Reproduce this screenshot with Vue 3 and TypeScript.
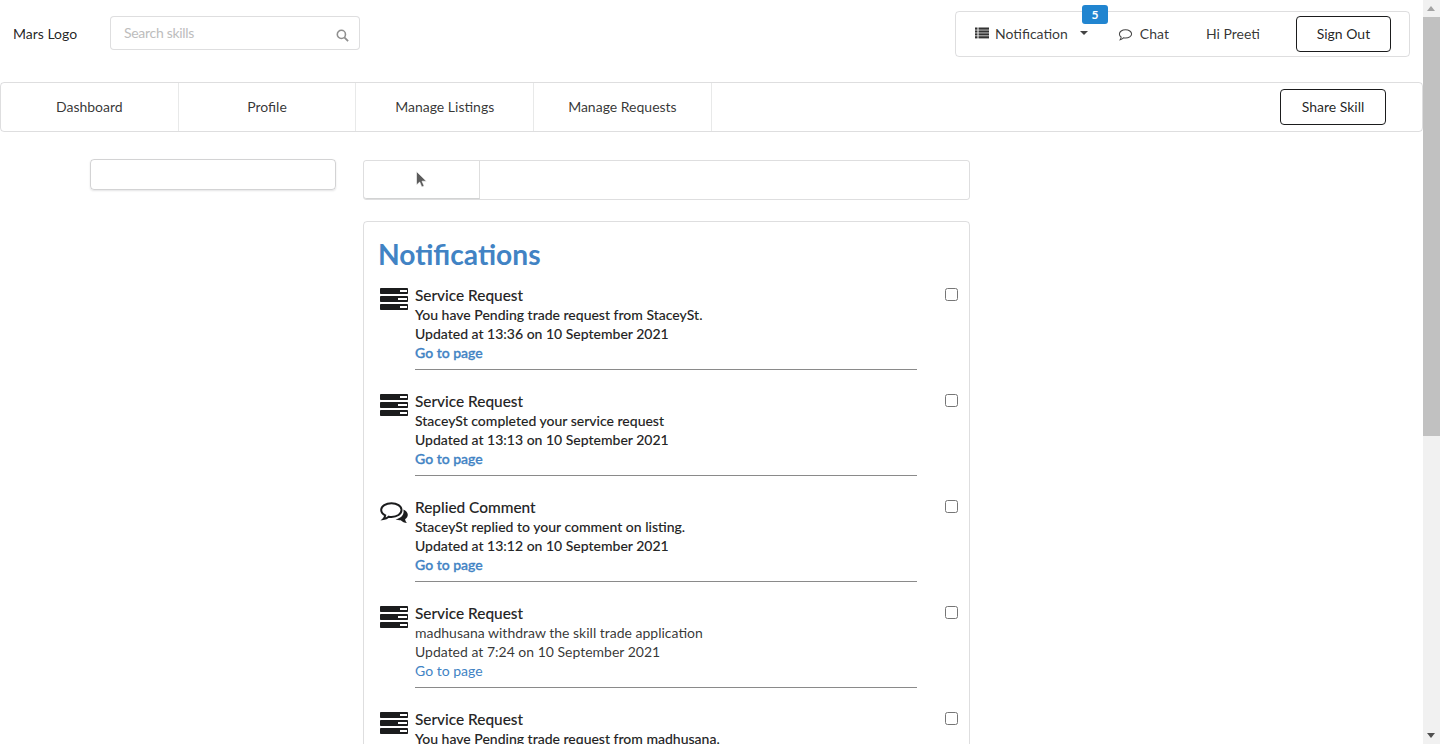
<script setup lang="ts">
interface Note {
  kind: 'server' | 'comment'
  title: string
  text: string
  updated: string
  unread: boolean
}

const navItems = ['Dashboard', 'Profile', 'Manage Listings', 'Manage Requests']

const notes: Note[] = [
  { kind: 'server', title: 'Service Request', text: 'You have Pending trade request from StaceySt.', updated: 'Updated at 13:36 on 10 September 2021', unread: true },
  { kind: 'server', title: 'Service Request', text: 'StaceySt completed your service request', updated: 'Updated at 13:13 on 10 September 2021', unread: true },
  { kind: 'comment', title: 'Replied Comment', text: 'StaceySt replied to your comment on listing.', updated: 'Updated at 13:12 on 10 September 2021', unread: true },
  { kind: 'server', title: 'Service Request', text: 'madhusana withdraw the skill trade application', updated: 'Updated at 7:24 on 10 September 2021', unread: false },
  { kind: 'server', title: 'Service Request', text: 'You have Pending trade request from madhusana.', updated: 'Updated at 7:20 on 10 September 2021', unread: true },
]
</script>

<template>
  <div class="page">
    <div class="content">
      <header class="top">
        <span class="logo">Mars Logo</span>
        <div class="search">
          <input class="search-input" placeholder="Search skills" />
          <svg class="search-icon" viewBox="0 0 14 14" width="13" height="13">
            <circle cx="5.8" cy="5.8" r="4.4" fill="none" stroke="#8f8f8f" stroke-width="1.7" />
            <path d="M9 9l4 4" stroke="#8f8f8f" stroke-width="2" />
          </svg>
        </div>
        <div class="user-menu">
          <div class="menu-item notif">
            <svg viewBox="0 0 14 12" width="14" height="12" fill="#333">
              <rect x="0" y="0.5" width="2.5" height="2.2" />
              <rect x="3.5" y="0.5" width="10.5" height="2.2" />
              <rect x="0" y="3.4" width="2.5" height="2.2" />
              <rect x="3.5" y="3.4" width="10.5" height="2.2" />
              <rect x="0" y="6.3" width="2.5" height="2.2" />
              <rect x="3.5" y="6.3" width="10.5" height="2.2" />
              <rect x="0" y="9.2" width="2.5" height="2.2" />
              <rect x="3.5" y="9.2" width="10.5" height="2.2" />
            </svg>
            <span>Notification</span>
            <i class="caret"></i>
            <span class="badge">5</span>
          </div>
          <div class="menu-item chat">
            <svg class="chat-icon" viewBox="0 0 16 14" width="15" height="14">
              <path d="M8 1.500c3.600 0 6.500 1.900 6.500 4.400S11.600 10.300 8 10.300c-.8 0-1.500-.1-2.200-.3-.9.9-2.200 1.800-3.500 2 .6-.8 1-1.700 1.100-2.800C2.300 8.400 1.500 7.200 1.500 5.900 1.500 3.400 4.400 1.500 8 1.500z" fill="none" stroke="#444" stroke-width="1.100" />
            </svg>
            <span>Chat</span>
          </div>
          <div class="menu-item hi">Hi Preeti</div>
          <button class="outline-btn sign-out">Sign Out</button>
        </div>
      </header>

      <nav class="nav">
        <a v-for="item in navItems" :key="item" class="nav-item">{{ item }}</a>
        <button class="outline-btn share">Share Skill</button>
      </nav>

      <main class="main">
        <aside class="side">
          <div class="side-box"></div>
        </aside>
        <section class="col">
          <div class="tabs">
            <div class="tab">
              <svg class="cursor" viewBox="0 0 11 17" width="11" height="17">
                <path d="M0.500 0.500v13.500l3.200-3 2.100 5 2.300-1-2.100-4.800h4.400z" fill="#5c5c5c" stroke="#fff" stroke-width="0.600" />
              </svg>
            </div>
          </div>
          <div class="card">
            <h1 class="title">Notifications</h1>
            <div v-for="(note, i) in notes" :key="i" class="note">
              <div class="note-icon">
                <svg v-if="note.kind === 'server'" viewBox="0 0 28 22" width="28" height="22">
                  <g fill="#1b1c1d">
                    <rect x="0" y="0" width="28" height="6" rx="0.800" />
                    <rect x="0" y="8" width="28" height="6" rx="0.800" />
                    <rect x="0" y="16" width="28" height="6" rx="0.800" />
                  </g>
                  <g fill="#fff">
                    <rect x="20" y="2" width="7" height="2" />
                    <rect x="18" y="10" width="9" height="2" />
                    <rect x="20" y="18" width="7" height="2" />
                  </g>
                </svg>
                <svg v-else viewBox="0 -2 28 24" width="28" height="24">
                  <path d="M11.500 1.200c5.500 0 10 3 10 6.900s-4.500 6.900-10 6.900c-1 0-1.900-.1-2.800-.3-1.500 1.300-3.300 2.100-5.400 2.400 1-1 1.700-2.200 1.900-3.700C2.600 12.100 1.200 10.200 1.200 8.100c0-3.900 4.700-6.900 10.300-6.900z" fill="#fff" stroke="#1b1c1d" stroke-width="2" />
                  <path d="M23.300 7.500c2.800 1.100 4.500 3.100 4.500 5.300 0 1.800-1 3.300-2.700 4.400.2 1.500.8 2.700 1.900 3.900-2.500-.2-4.700-1.300-6.300-2.800-1.600 0-3.600-.4-5.100-1.100 4.500-.5 8.200-3.600 8-8.200z" fill="#1b1c1d" />
                </svg>
              </div>
              <div class="note-body" :class="{ unread: note.unread }">
                <div class="note-title">{{ note.title }}</div>
                <div>{{ note.text }}</div>
                <div>{{ note.updated }}</div>
                <a class="go">Go to page</a>
              </div>
              <input class="check" type="checkbox" />
            </div>
          </div>
        </section>
      </main>
    </div>
    <div class="scrollbar">
      <i class="arrow up"></i>
      <div class="thumb"></div>
      <i class="arrow down"></i>
    </div>
  </div>
</template>

<style>
html,
body {
  margin: 0;
  overflow: hidden;
  background: #fff;
}
</style>

<style scoped>
.page {
  display: flex;
  height: 744px;
  overflow: hidden;
  font-family: Lato, "Liberation Sans", sans-serif;
  font-size: 14px;
  line-height: 19px;
  color: rgba(0, 0, 0, 0.87);
}

.content {
  flex: 1;
  min-width: 0;
  height: 744px;
  overflow: hidden;
}

.top {
  display: flex;
  align-items: flex-start;
  height: 82px;
  box-sizing: border-box;
  padding: 11px 13px 0;
}

.logo {
  width: 97px;
  margin-top: 13px;
}

.search {
  position: relative;
  width: 250px;
  height: 34px;
  margin-top: 5px;
}

.search-input {
  width: 100%;
  height: 100%;
  box-sizing: border-box;
  padding: 0 36px 2px 13px;
  border: 1px solid rgba(34, 36, 38, 0.15);
  border-radius: 4px;
  outline: none;
  font: inherit;
  letter-spacing: -0.3px;
}

.search-input::placeholder {
  color: #bdbdbd;
}

.search-icon {
  position: absolute;
  right: 11px;
  top: 13px;
}

.user-menu {
  display: flex;
  align-items: center;
  width: 455px;
  height: 46px;
  box-sizing: border-box;
  margin-left: auto;
  border: 1px solid rgba(34, 36, 38, 0.15);
  border-radius: 4px;
}

.menu-item {
  display: flex;
  align-items: center;
  margin-bottom: 2px;
  color: rgba(0, 0, 0, 0.8);
}

.notif {
  position: relative;
  margin-left: 19px;
  gap: 6px;
}

.caret {
  width: 0;
  height: 0;
  margin-left: 6px;
  border: 4px solid transparent;
  border-top-color: #444;
  border-bottom: 0;
}

.badge {
  position: absolute;
  left: 107px;
  top: -19px;
  width: 26px;
  height: 19px;
  border-radius: 3px;
  background: #2185d0;
  color: #fff;
  font-size: 12px;
  font-weight: 700;
  line-height: 19px;
  text-align: center;
}

.chat {
  margin-left: 30px;
  gap: 7px;
}

.chat-icon {
  margin-top: 3px;
}

.hi {
  margin-left: 37px;
}

.outline-btn {
  box-sizing: border-box;
  height: 36px;
  padding: 0 0 2px;
  border: 1px solid #1b1c1d;
  border-radius: 4px;
  background: #fff;
  color: rgba(0, 0, 0, 0.87);
  font: inherit;
}

.sign-out {
  width: 95px;
  margin-left: 36px;
}

.nav {
  display: flex;
  align-items: center;
  height: 50px;
  box-sizing: border-box;
  border: 1px solid rgba(34, 36, 38, 0.15);
  border-radius: 4px;
}

.nav-item {
  display: flex;
  align-items: center;
  justify-content: center;
  width: 177.7px;
  height: 100%;
  box-sizing: border-box;
  padding-bottom: 2px;
  border-right: 1px solid rgba(34, 36, 38, 0.1);
  color: rgba(0, 0, 0, 0.8);
}

.share {
  width: 106px;
  margin-left: auto;
  margin-right: 36px;
}

.main {
  display: flex;
  align-items: flex-start;
  padding: 27px 0 0 90px;
}

.side {
  width: 246px;
  flex-shrink: 0;
}

.side-box {
  height: 31px;
  box-sizing: border-box;
  border: 1px solid rgba(34, 36, 38, 0.2);
  border-radius: 4px;
  box-shadow: 0 1px 2px rgba(34, 36, 38, 0.12);
}

.col {
  width: 607px;
  margin-left: 27px;
  padding-top: 1px;
}

.tabs {
  display: flex;
  height: 40px;
  box-sizing: border-box;
  border: 1px solid rgba(34, 36, 38, 0.15);
  border-radius: 3px;
}

.tab {
  display: flex;
  align-items: center;
  justify-content: center;
  width: 116px;
  box-sizing: border-box;
  border-right: 1px solid rgba(34, 36, 38, 0.15);
  border-bottom: 1px solid rgba(34, 36, 38, 0.2);
  border-radius: 3px 0 0 3px;
}

.card {
  margin-top: 21px;
  box-sizing: border-box;
  padding: 14px 14px 0;
  border: 1px solid rgba(34, 36, 38, 0.15);
  border-radius: 4px;
}

.title {
  margin: 0 0 14px;
  color: #4183c4;
  font-size: 28.2px;
  font-weight: 700;
  line-height: 36px;
}

.note {
  position: relative;
  display: flex;
  height: 106px;
}

.note-icon {
  width: 37px;
  flex-shrink: 0;
  padding: 2px 0 0 2px;
  box-sizing: border-box;
}

.note-body {
  width: 502px;
  height: 83px;
  box-sizing: content-box;
  border-bottom: 1px solid #8a8a8a;
  color: rgba(0, 0, 0, 0.8);
}

.note-body.unread {
  color: rgba(0, 0, 0, 0.87);
  font-weight: 500;
  -webkit-text-stroke: 0.2px rgba(0, 0, 0, 0.5);
}

.note-title {
  color: rgba(0, 0, 0, 0.87);
  font-size: 15.4px;
  line-height: 19px;
  font-weight: 500;
  -webkit-text-stroke: 0.2px rgba(0, 0, 0, 0.5);
}

.go {
  color: #4183c4;
}

.unread .go {
  -webkit-text-stroke: 0.35px #4183c4;
}

.check {
  position: absolute;
  left: 567px;
  top: 2px;
  width: 13px;
  height: 13px;
  margin: 0;
}

.scrollbar {
  position: relative;
  display: flex;
  flex-direction: column;
  align-items: stretch;
  width: 17px;
  flex-shrink: 0;
  background: #f1f1f1;
}

.thumb {
  position: absolute;
  left: 0;
  right: 0;
  top: 17px;
  height: 419px;
  background: #c1c1c1;
}

.arrow {
  position: absolute;
  left: 4px;
  width: 0;
  height: 0;
  border-left: 4px solid transparent;
  border-right: 4px solid transparent;
}

.arrow.up {
  top: 6px;
  border-bottom: 5px solid #a3a3a3;
}

.arrow.down {
  bottom: 6px;
  border-top: 5px solid #505050;
}
</style>
